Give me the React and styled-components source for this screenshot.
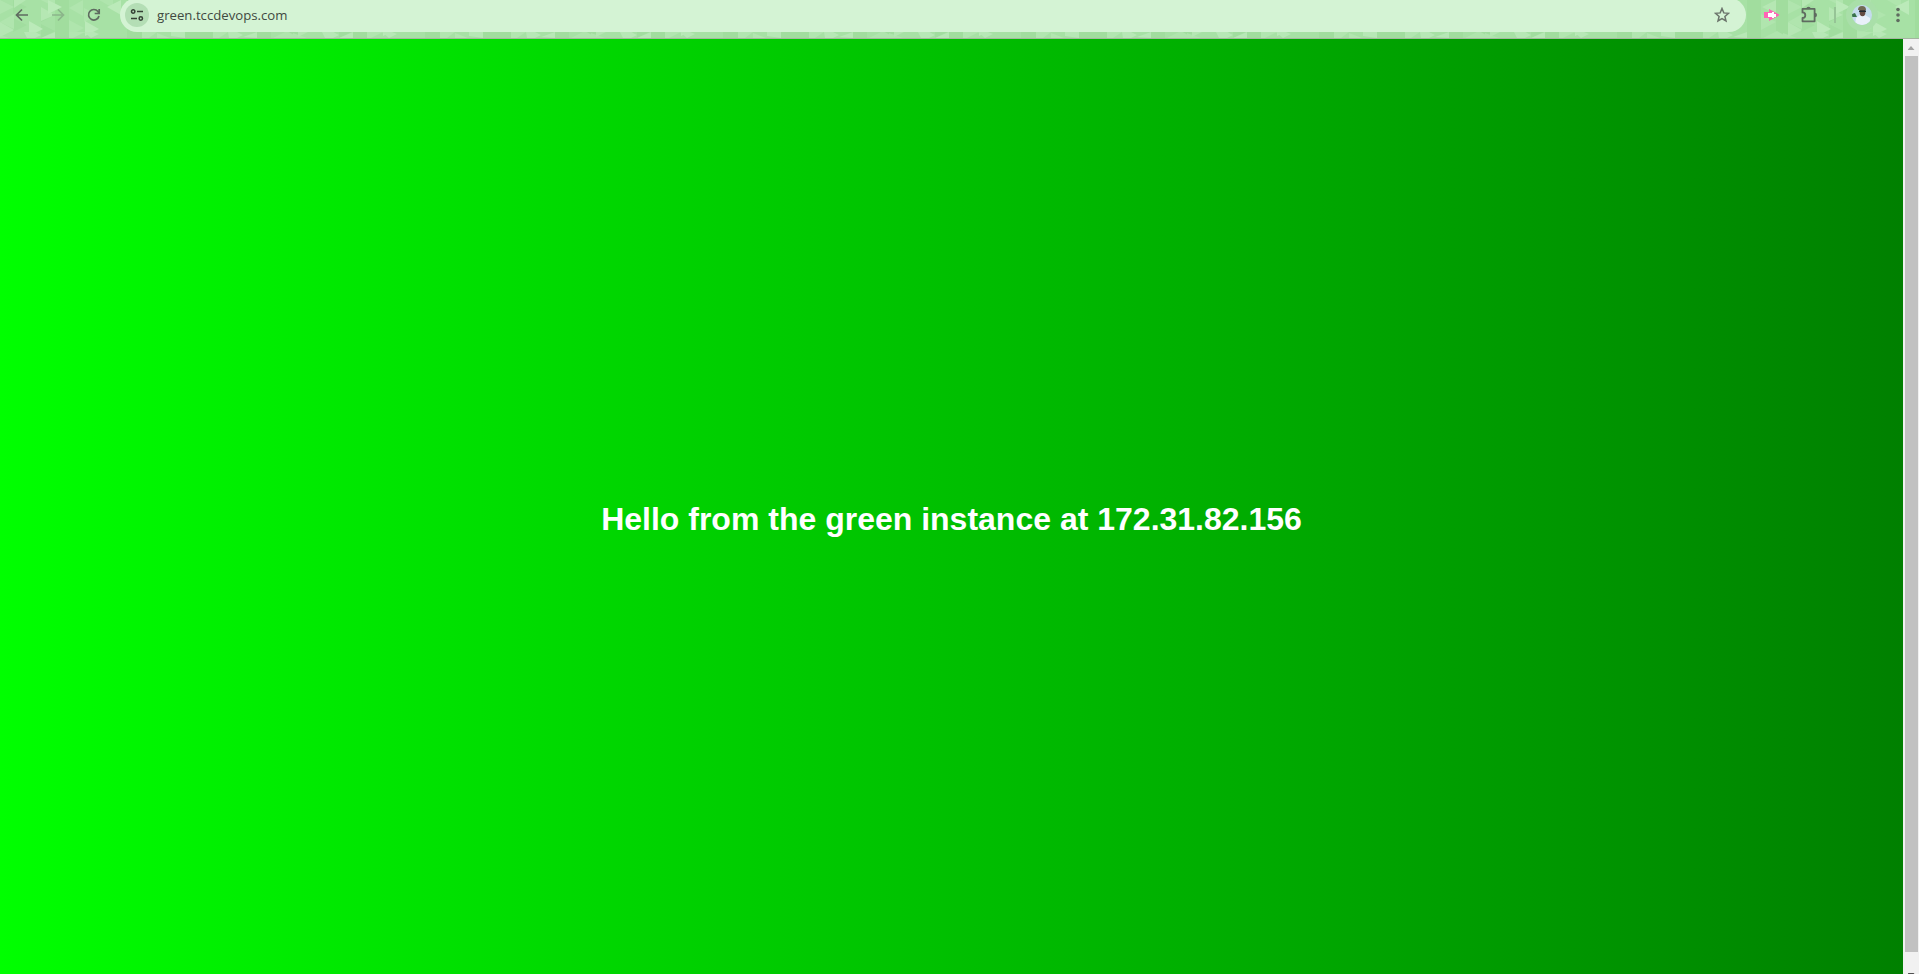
import React from "react";
import styled, { createGlobalStyle } from "styled-components";

const Global = createGlobalStyle`
  html, body { margin: 0; padding: 0; overflow: hidden; }
  * { box-sizing: border-box; }
`;

const Browser = styled.div`
  width: 100vw;
  height: 100vh;
  display: flex;
  flex-direction: column;
  overflow: hidden;
`;

const Toolbar = styled.header`
  position: relative;
  height: 39px;
  flex: none;
  overflow: hidden;
  background: #a6e0a3;
  border-bottom: 1px solid #a5b5a1;
  font-family: "Open Sans", "Noto Sans", sans-serif;
`;

const Texture = styled.svg`
  position: absolute;
  inset: 0;
  width: 100%;
  height: 100%;
`;

const Controls = styled.div`
  position: relative;
  display: flex;
  align-items: flex-start;
  height: 38px;
`;

const Nav = styled.nav`
  display: flex;
  align-items: center;
  gap: 20px;
  width: 120px;
  height: 30px;
  padding-left: 14px;
  flex: none;
`;

const AddressBar = styled.div`
  display: flex;
  align-items: center;
  width: 1626px;
  height: 34px;
  margin-top: -2px;
  padding: 0 16px 0 5px;
  background: #d4f3d4;
  border-radius: 17px;
  flex: none;
`;

const SiteInfo = styled.span`
  display: flex;
  align-items: center;
  justify-content: center;
  width: 24px;
  height: 24px;
  border-radius: 50%;
  background: #b4deb5;
  margin-right: 8px;
`;

const Url = styled.span`
  flex: 1;
  color: #414941;
  font-size: 13.2px;
  line-height: 20px;
`;

const Actions = styled.div`
  display: flex;
  align-items: center;
  height: 30px;
  flex: 1;
`;

const Icon = styled.svg`
  display: block;
  flex: none;
  width: ${(p) => p.$w || 16}px;
  height: ${(p) => p.$h || 16}px;
  margin-left: ${(p) => p.$left || 0}px;
`;

const Divider = styled.span`
  width: 2px;
  height: 16px;
  margin-left: 16px;
  background: #96c496;
`;

const Profile = styled.span`
  display: flex;
  align-items: center;
  justify-content: center;
  width: 32px;
  height: 32px;
  margin-left: 10px;
  border-radius: 50%;
  background: #a9dfa9;
`;

const Viewport = styled.div`
  flex: 1;
  display: flex;
  min-height: 0;
`;

const Page = styled.main`
  flex: 1;
  display: flex;
  align-items: center;
  justify-content: center;
  padding-top: 24px;
  background: linear-gradient(to right, #00ff00, #008000);
`;

const Title = styled.h1`
  margin: 0;
  color: #fff;
  font: bold 32px/36px "Liberation Sans", Arial, sans-serif;
  white-space: nowrap;
`;

const ScrollTrack = styled.div`
  display: flex;
  flex-direction: column;
  align-items: center;
  width: 16px;
  background: #f1f1f1;
  overflow: hidden;
`;

const ScrollArrow = styled.span`
  flex: none;
  width: 7px;
  height: 4px;
  margin: ${(p) => (p.$down ? "21px 0 0" : "7px 0 6px")};
  background: ${(p) => (p.$down ? "#505050" : "#a3a3a3")};
  clip-path: ${(p) => (p.$down ? "polygon(0 0, 100% 0, 50% 100%)" : "polygon(50% 0, 100% 100%, 0 100%)")};
`;

const ScrollThumb = styled.span`
  flex: none;
  width: 13px;
  height: 896px;
  background: #c1c1c1;
`;

const Pattern = () => (
  <Texture aria-hidden="true">
    <defs>
      <pattern id="facets" x="-41" y="0" width="298" height="38" patternUnits="userSpaceOnUse">
        <rect width="298" height="38" fill="#a7e1a5" />
        <path d="M0 0H14V38H0ZM29 0H41V38H29ZM96 0H110V38H96ZM168 0H183V38H168ZM226 0H254V38H226Z" fill="#a1dd9e" />
        <path d="M54 0L68 7L54 14ZM54 18L68 25L54 32ZM82 8L96 15L82 22ZM82 24L96 31L82 38Z" fill="#a1dd9f" />
        <path d="M14 14L29 22L14 30ZM41 0L55 7L41 14ZM55 14L41 22L55 29ZM96 7L82 0H96ZM110 8L124 0V16Z" fill="#b0e5ae" />
        <path d="M16 38L30 31L42 38ZM36 38V33L50 38ZM110 20L125 28L110 36ZM125 8L139 15L125 22ZM140 0H154V8Z" fill="#afe5ad" />
        <path d="M15 7L29 0V14ZM41 22L55 30L41 37ZM55 0H67L55 8ZM82 7L96 15L82 21Z" fill="#b5e7b3" />
        <path d="M70 21L84 29L70 36ZM126 21L140 29L126 36ZM89 0L103 7L89 14ZM148 7L162 0V15Z" fill="#bbeab9" />
        <path d="M110 32H126L114 38H110ZM183 32H198L190 38H183ZM198 33L211 38H198ZM254 32H269L260 38H254Z" fill="#b2e6b0" />
        <path d="M65 32H76L82 35L76 38H68ZM82 38L96 32V38ZM125 32H135L140 34L132 38ZM212 32H226V38L212 36ZM269 32H278L284 35L278 38H270ZM284 37L298 32V38Z" fill="#b7e8b6" />
      </pattern>
    </defs>
    <rect width="100%" height="100%" fill="url(#facets)" />
  </Texture>
);

export default function App() {
  return (
    <Browser>
      <Global />
      <Toolbar>
        <Pattern />
        <Controls>
          <Nav>
            <Icon viewBox="0 0 16 16" fill="none" stroke="#5f6b60" strokeWidth="1.7"><path d="M14 8H3M8 2.5L2.5 8L8 13.5" /></Icon>
            <Icon viewBox="0 0 16 16" fill="none" stroke="#8bb58a" strokeWidth="1.7"><path d="M2 8H13M8 2.5L13.5 8L8 13.5" /></Icon>
            <Icon viewBox="0 0 16 16" fill="none" stroke="#5f6b60" strokeWidth="1.7"><path d="M13 9A5.3 5.3 0 1 1 12 4.5L13 6M13.2 2V6.5H8.7" /></Icon>
          </Nav>
          <AddressBar>
            <SiteInfo>
              <Icon $w={14} $h={14} viewBox="0 0 14 14" fill="none" stroke="#344034" strokeWidth="1.5"><circle cx="3.2" cy="3.5" r="1.7" /><path d="M7 3.5H13M1 10.5H7" /><circle cx="10.8" cy="10.5" r="1.7" /></Icon>
            </SiteInfo>
            <Url>green.tccdevops.com</Url>
            <Icon viewBox="0 0 16 16" fill="none" stroke="#6b746b" strokeWidth="1.5"><path d="M8 1.5L9.8 5.9L14.5 6.3L10.9 9.4L12 14L8 11.6L4 14L5.1 9.4L1.5 6.3L6.2 5.9Z" /></Icon>
          </AddressBar>
          <Actions>
            <Icon $left={17} viewBox="0 0 16 16"><path d="M1 5H6V2L17 8L6 14V11H1Z" fill="#ff63b6" /><path d="M5 6H9V5H11V7H13V10H11V11H9V10H5Z" fill="#fff" /></Icon>
            <Icon $left={22} $w={17} $h={18} viewBox="0 0 17 18"><path d="M1.5 2.9H13.6V15.3H1.5V12A2.8 2.8 0 0 0 1.5 6.4Z" fill="none" stroke="#5f6b60" strokeWidth="1.8" strokeLinejoin="round" /><path d="M5.3 3A2.2 2.2 0 0 1 9.7 3ZM13.8 6.8A2.2 2.2 0 0 1 13.8 11.2Z" fill="#5f6b60" /></Icon>
            <Divider />
            <Profile>
              <Icon $w={20} $h={20} viewBox="0 0 20 20">
                <defs><clipPath id="face"><circle cx="10" cy="10" r="10" /></clipPath></defs>
                <g clipPath="url(#face)"><rect width="20" height="20" fill="#c4dced" /><path d="M0 9L3 8L5 12H0Z" fill="#39734b" /><path d="M3 20L4 13L8 10H13L18 13V20Z" fill="#e9f0fa" /><ellipse cx="10.5" cy="7" rx="2.9" ry="4.3" fill="#654b42" /><path d="M6 5Q6 1 10 1Q14 1 14 5Z" fill="#726a54" /><path d="M7 5.5H14V7H7Z" fill="#222a30" /></g>
              </Icon>
            </Profile>
            <Icon $left={12} viewBox="0 0 16 16" fill="#5f6b60"><circle cx="8" cy="2.5" r="1.8" /><circle cx="8" cy="8" r="1.8" /><circle cx="8" cy="13.5" r="1.8" /></Icon>
          </Actions>
        </Controls>
      </Toolbar>
      <Viewport>
        <Page><Title>Hello from the green instance at 172.31.82.156</Title></Page>
        <ScrollTrack><ScrollArrow /><ScrollThumb /><ScrollArrow $down /></ScrollTrack>
      </Viewport>
    </Browser>
  );
}
